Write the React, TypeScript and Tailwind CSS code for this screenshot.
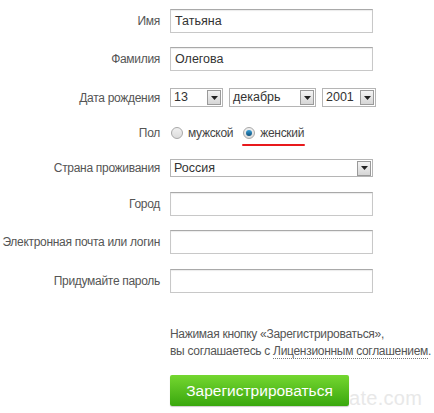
import React from "react";

function Label({ children }: { children: React.ReactNode }) {
  return (
    <div className="w-[160px] shrink-0 whitespace-nowrap text-right text-[12px] tracking-[-0.3px] text-[#555]">
      {children}
    </div>
  );
}

function TextInput({ value }: { value?: string }) {
  return (
    <div className="flex h-[24px] w-[203px] items-center border border-[#c8c8c8] border-t-[#a9a9a9] bg-white px-[4px] text-[12.5px] text-[#333] shadow-[inset_0_1px_1px_rgba(0,0,0,0.08)]">
      {value}
    </div>
  );
}

function Arrow() {
  return (
    <div className="flex h-[15px] w-[14px] items-center justify-center border border-[#9a9a9a] bg-gradient-to-b from-[#f4f4f4] to-[#d6d6d6]">
      <svg width="7" height="4" viewBox="0 0 7 4">
        <path d="M0 0h7L3.5 4z" fill="#222" />
      </svg>
    </div>
  );
}

function Select({ value, className }: { value: string; className: string }) {
  return (
    <div className={`flex items-center justify-between border border-[#b5b5b5] bg-white pl-[3px] pr-[1px] text-[12.5px] text-[#333] ${className}`}>
      <span>{value}</span>
      <Arrow />
    </div>
  );
}

function Radio({ checked }: { checked?: boolean }) {
  return (
    <div className="flex h-[12px] w-[12px] items-center justify-center rounded-full border border-[#a8a8a8] bg-gradient-to-b from-[#f0f0f0] to-[#dcdcdc]">
      {checked && <div className="h-[6px] w-[6px] rounded-full bg-gradient-to-b from-[#3aa0d8] to-[#0b4f7a]" />}
    </div>
  );
}

export default function App() {
  return (
    <div className="relative h-[413px] w-[434px] overflow-hidden bg-white pt-[9px] font-['Liberation_Sans',Arial,sans-serif]">
      <div className="absolute left-[300px] top-[386px] text-[20px] leading-[24px] tracking-[0.3px] text-[#e8e8e8]">
        NetMate.com
      </div>
      <div className="flex items-center gap-[10px]">
        <Label>Имя</Label>
        <TextInput value="Татьяна" />
      </div>
      <div className="mt-[14px] flex items-center gap-[10px]">
        <Label>Фамилия</Label>
        <TextInput value="Олегова" />
      </div>
      <div className="mt-[17px] flex items-center gap-[10px]">
        <Label>Дата рождения</Label>
        <div className="flex gap-[6px]">
          <Select value="13" className="h-[19px] w-[53px]" />
          <Select value="декабрь" className="h-[19px] w-[87px]" />
          <Select value="2001" className="h-[19px] w-[54px]" />
        </div>
      </div>
      <div className="mt-[19px] flex h-[14px] items-center gap-[10px]">
        <Label>Пол</Label>
        <div className="flex items-center text-[12px] tracking-[-0.3px] text-[#444]">
          <div className="ml-[1px]">
            <Radio />
          </div>
          <span className="ml-[5px]">мужской</span>
          <div className="ml-[10px]">
            <Radio checked />
          </div>
          <span className="ml-[5px]">женский</span>
        </div>
      </div>
      <div className="ml-[242px] mt-[4px] h-[2px] w-[63px] rounded-full bg-[#e8191c]" />
      <div className="mt-[13px] flex items-center gap-[10px]">
        <Label>Страна проживания</Label>
        <Select value="Россия" className="h-[18px] w-[203px]" />
      </div>
      <div className="mt-[15px] flex items-center gap-[10px]">
        <Label>Город</Label>
        <TextInput />
      </div>
      <div className="mt-[14px] flex items-center gap-[10px]">
        <Label>Электронная почта или логин</Label>
        <TextInput />
      </div>
      <div className="mt-[15px] flex items-center gap-[10px]">
        <Label>Придумайте пароль</Label>
        <TextInput />
      </div>
      <div className="ml-[170px] mt-[33px] whitespace-nowrap text-[12px] leading-[17px] tracking-[-0.3px] text-[#555]">
        <div>Нажимая кнопку «Зарегистрироваться»,</div>
        <div>
          вы соглашаетесь с{" "}
          <span className="border-b border-dotted border-[#777]">Лицензионным соглашением</span>.
        </div>
      </div>
      <div className="relative ml-[170px] mt-[15px] flex h-[31px] w-[179px] items-center justify-center rounded-[2px] bg-gradient-to-b from-[#74d72f] to-[#38a70c] text-[15.5px] text-white shadow-[0_1px_1px_rgba(0,0,0,0.2)]">
        Зарегистрироваться
      </div>
    </div>
  );
}
